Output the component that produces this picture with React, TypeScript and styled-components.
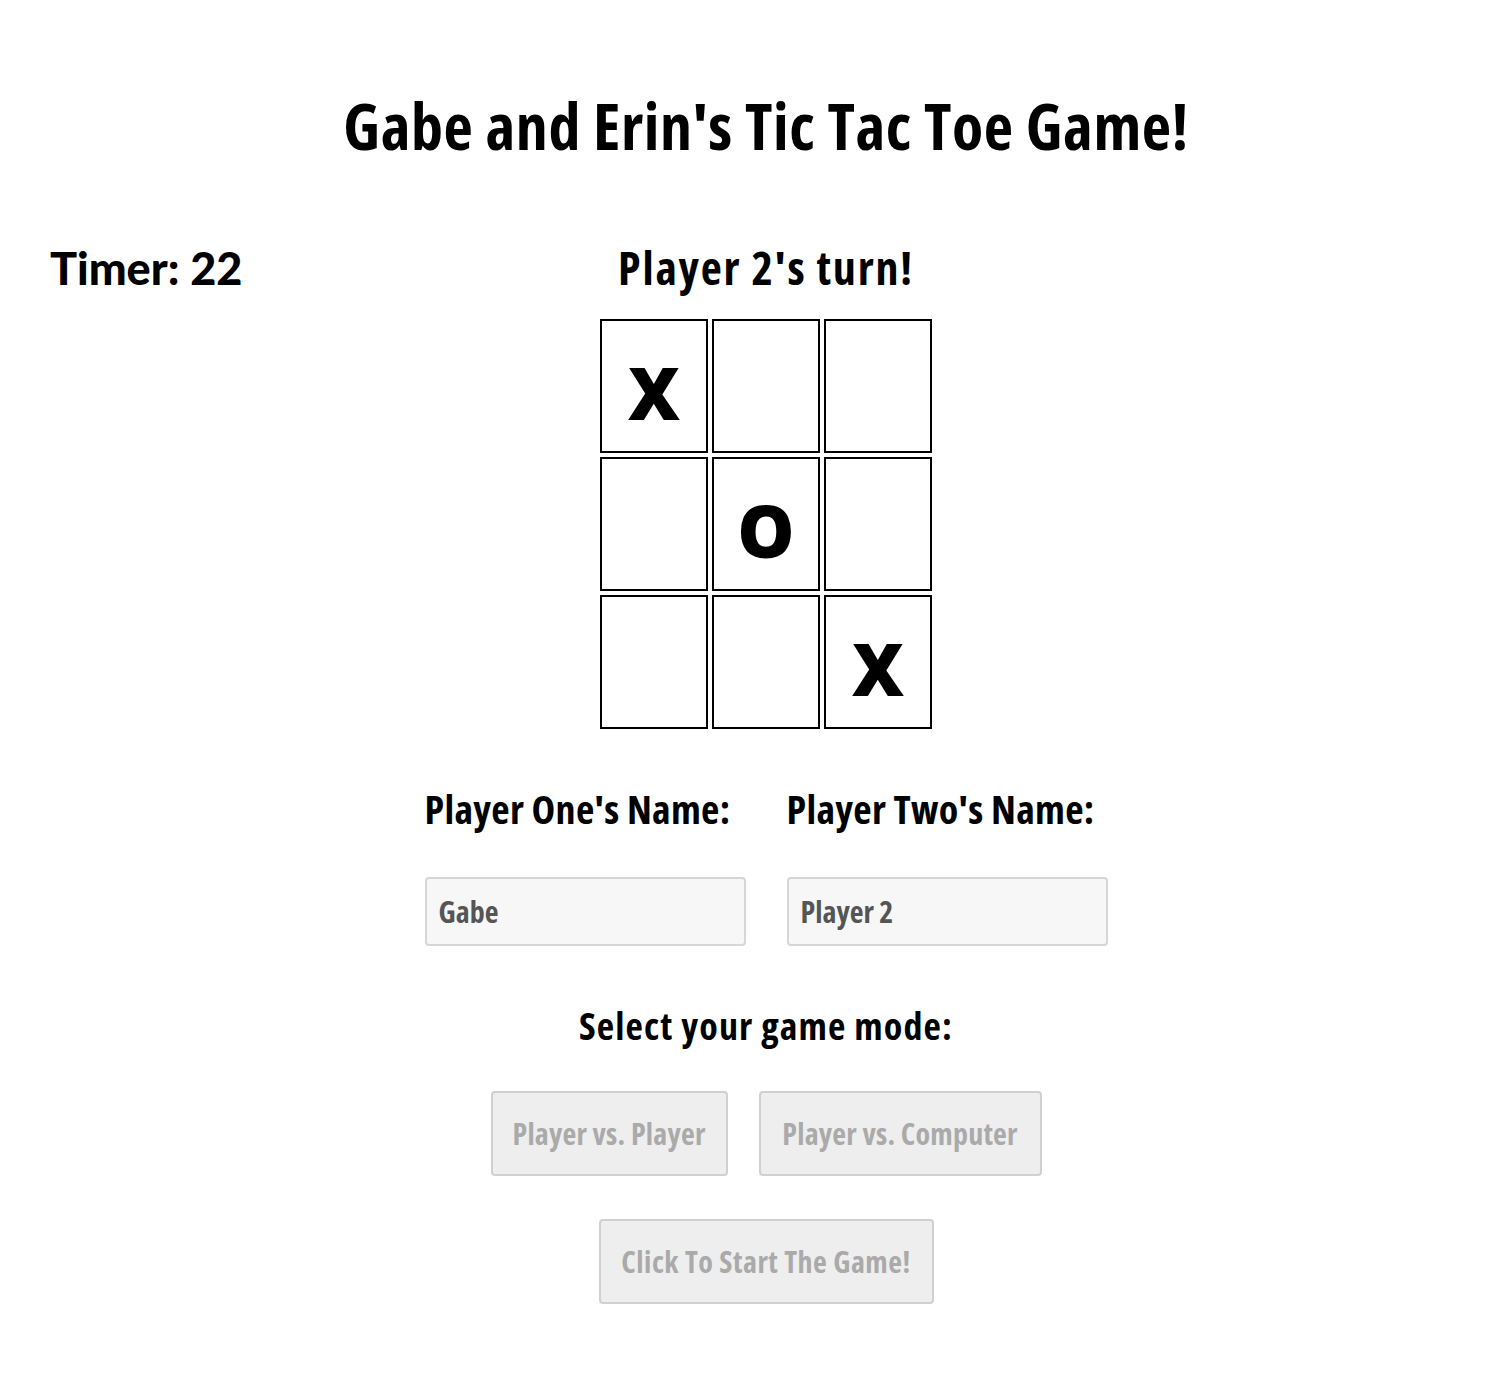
import React from "react";
import styled, { createGlobalStyle } from "styled-components";

const ACME = `"Open Sans", "Roboto", sans-serif`;

const Global = createGlobalStyle`
  html, body { margin: 0; padding: 0; background: #ffffff; }
  body { font-family: ${ACME}; color: #000; }
`;

const Page = styled.div`
  width: 1490px;
  box-sizing: border-box;
  padding: 94px 0 80px 42px;
  display: flex;
  flex-direction: column;
  align-items: center;
`;

const Title = styled.h1`
  margin: 0;
  font-family: ${ACME};
  font-stretch: 75%;
  font-weight: 700;
  font-size: 64px;
  line-height: 64px;
  letter-spacing: 0.6px;
  white-space: nowrap;
`;

const StatusRow = styled.div`
  align-self: stretch;
  margin-top: 81px;
  display: grid;
  grid-template-columns: 1fr auto 1fr;
  align-items: baseline;
`;

const Timer = styled.div`
  padding-left: 8px;
  font-family: "Lato", sans-serif;
  font-weight: 900;
  font-size: 45px;
  line-height: 56px;
  white-space: pre;
`;

const Turn = styled.h2`
  margin: 0;
  font-family: ${ACME};
  font-stretch: 75%;
  font-weight: 700;
  font-size: 46px;
  line-height: 56px;
  letter-spacing: 1.8px;
  white-space: nowrap;
`;

const Board = styled.div`
  margin-top: 23px;
  display: grid;
  grid-template-columns: repeat(3, 108px);
  grid-auto-rows: 134px;
  gap: 4px;
`;

const Cell = styled.div`
  box-sizing: border-box;
  border: 2px solid #000;
  display: flex;
  align-items: center;
  justify-content: center;
  padding-top: 12px;
  font-family: ${ACME};
  font-stretch: 88%;
  font-weight: 800;
  font-size: 72px;
  cursor: pointer;
`;

const NamesRow = styled.div`
  margin-top: 56px;
  display: grid;
  grid-template-columns: 321px 321px;
  column-gap: 41px;
`;

const NameField = styled.label`
  display: flex;
  flex-direction: column;
  gap: 44px;
`;

const Label = styled.span`
  font-family: ${ACME};
  font-stretch: 75%;
  font-weight: 700;
  font-size: 40px;
  line-height: 48px;
  letter-spacing: 0.3px;
  white-space: nowrap;
`;

const NameInput = styled.input`
  box-sizing: border-box;
  width: 321px;
  height: 69px;
  padding: 0 12px;
  background: #f7f7f7;
  border: 2px solid #d6d6d6;
  border-radius: 4px;
  font-family: ${ACME};
  font-stretch: 75%;
  font-weight: 700;
  font-size: 30px;
  color: #555;
  outline: none;
`;

const ModeHeading = styled.h3`
  margin: 56px 0 0;
  font-family: ${ACME};
  font-stretch: 75%;
  font-weight: 700;
  font-size: 38px;
  line-height: 46px;
  letter-spacing: 1.1px;
  white-space: nowrap;
`;

const ModeRow = styled.div`
  margin-top: 43px;
  display: flex;
  gap: 31px;
`;

const Button = styled.button<{ $w: number; $spacing?: number }>`
  box-sizing: border-box;
  width: ${(p) => p.$w}px;
  height: 85px;
  padding: 0;
  background: #eeeeee;
  border: 2px solid #d0d0d0;
  border-radius: 4px;
  font-family: ${ACME};
  font-stretch: 75%;
  font-weight: 700;
  font-size: 30px;
  letter-spacing: ${(p) => p.$spacing ?? 0.2}px;
  color: #aaaaaa;
  white-space: nowrap;
`;

const StartButton = styled(Button)`
  margin-top: 43px;
`;

const cells = ["X", "", "", "", "O", "", "", "", "X"];

export default function App() {
  return (
    <>
      <Global />
      <Page>
        <Title>Gabe and Erin's Tic Tac Toe Game!</Title>
        <StatusRow>
          <Timer>Timer: 22</Timer>
          <Turn>Player 2's turn!</Turn>
          <span />
        </StatusRow>
        <Board>
          {cells.map((c, i) => (
            <Cell key={i}>{c}</Cell>
          ))}
        </Board>
        <NamesRow>
          <NameField>
            <Label>Player One's Name:</Label>
            <NameInput defaultValue="Gabe" />
          </NameField>
          <NameField>
            <Label>Player Two's Name:</Label>
            <NameInput defaultValue="Player 2" />
          </NameField>
        </NamesRow>
        <ModeHeading>Select your game mode:</ModeHeading>
        <ModeRow>
          <Button $w={237} disabled>Player vs. Player</Button>
          <Button $w={283} disabled>Player vs. Computer</Button>
        </ModeRow>
        <StartButton $w={335} $spacing={0.5} disabled>Click To Start The Game!</StartButton>
      </Page>
    </>
  );
}
